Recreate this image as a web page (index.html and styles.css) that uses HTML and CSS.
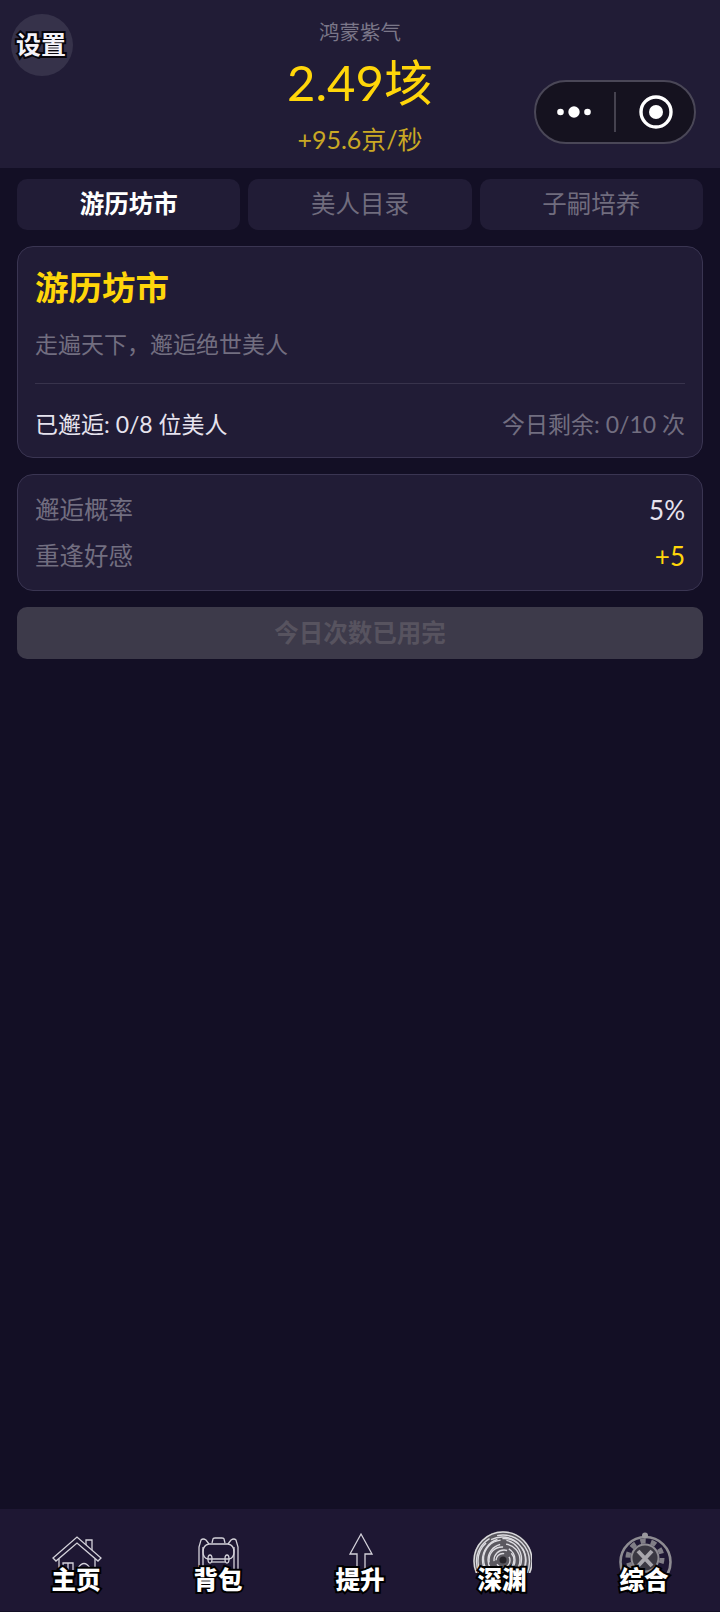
FILE: index.html
```html
<!DOCTYPE html>
<html lang="zh-CN">
<head>
    <meta charset="UTF-8">
    <meta name="viewport" content="width=device-width, initial-scale=1.0">
    <title>游历坊市</title>
    <link rel="stylesheet" href="styles.css">
</head>
<body>
    <div class="app">
        <header class="top-bar">
            <div class="settings-btn"><span>设置</span></div>
            <div class="wealth">
                <div class="wealth-label">鸿蒙紫气</div>
                <div class="wealth-value">2.49垓</div>
                <div class="wealth-rate">+95.6京/秒</div>
            </div>
            <div class="capsule">
                <svg class="capsule-more" viewBox="0 0 34 14">
                    <circle cx="3.5" cy="7" r="3.3"/>
                    <circle cx="17" cy="7" r="5.7"/>
                    <circle cx="30.5" cy="7" r="3.3"/>
                </svg>
                <i class="capsule-line"></i>
                <svg class="capsule-close" viewBox="0 0 34 34">
                    <circle class="ring" cx="17" cy="17" r="15"/>
                    <circle cx="17" cy="17" r="7"/>
                </svg>
            </div>
        </header>

        <main class="content">
            <div class="tabs">
                <div class="tab active">游历坊市</div>
                <div class="tab">美人目录</div>
                <div class="tab">子嗣培养</div>
            </div>

            <section class="card intro">
                <h2>游历坊市</h2>
                <p>走遍天下，邂逅绝世美人</p>
                <div class="intro-foot">
                    <span class="met">已邂逅: 0/8 位美人</span>
                    <span class="left">今日剩余: 0/10 次</span>
                </div>
            </section>

            <section class="card odds">
                <div class="odds-row"><span>邂逅概率</span><b>5%</b></div>
                <div class="odds-row"><span>重逢好感</span><b class="gold">+5</b></div>
            </section>

            <div class="go-btn">今日次数已用完</div>
        </main>

        <nav class="bottom-nav">
            <div class="nav-item">
                <svg class="nav-icon" viewBox="0 0 60 44">
                    <g class="line">
                        <path d="M7 23 L31 2 L55 23 L52 26 L31 8 L10 26 Z"/>
                        <path d="M40 10 V5 H46 V15"/>
                        <path d="M13 24 V44 M49 24 V44"/>
                        <path d="M17 38 V28 H27 V38 M22 28 V38"/>
                        <path d="M32 38 V33 Q38 24 44 33 V38"/>
                    </g>
                </svg>
                <span>主页</span>
            </div>
            <div class="nav-item">
                <svg class="nav-icon" viewBox="0 0 60 44">
                    <g class="line">
                        <path d="M24 8 L25 4 Q25 3 27 3 H34 Q36 3 36 4 L37 8"/>
                        <path d="M21 9 H40 Q46 10 46 17 Q46 23 41 24 H20 Q15 23 15 17 Q15 10 21 9 Z"/>
                        <path d="M21 9 L18 5 Q15 3 13 5 L11 12 V44"/>
                        <path d="M40 9 L43 5 Q46 3 48 5 L50 12 V44"/>
                        <path d="M15 12 V44 M46 12 V44"/>
                        <ellipse cx="22" cy="24" rx="2" ry="4"/>
                        <ellipse cx="39" cy="24" rx="2" ry="4"/>
                        <path d="M24 27 H37"/>
                    </g>
                </svg>
                <span>背包</span>
            </div>
            <div class="nav-item">
                <svg class="nav-icon arrow" viewBox="0 0 60 44">
                    <path class="line" d="M27 44 V19 H20 L31 -1 L42 19 H35 V44"/>
                </svg>
                <span>提升</span>
            </div>
            <div class="nav-item">
                <svg class="nav-icon tall" viewBox="0 0 60 42">
                    <circle cx="31" cy="30" r="30" fill="#5a585f"/>
                    <g class="swirl">
                        <circle cx="31" cy="30" r="29"/>
                        <circle cx="31" cy="30.5" r="26.5" stroke-dasharray="60 6 44 8"/>
                        <circle cx="30" cy="30" r="24" stroke-dasharray="30 5 60 6"/>
                        <circle cx="32" cy="29" r="21.5" stroke-dasharray="48 6 40 5"/>
                        <circle cx="30.5" cy="28" r="19" stroke-dasharray="36 7 44 6"/>
                        <circle cx="32" cy="29" r="16" stroke-dasharray="26 5 40 6"/>
                        <circle cx="30" cy="29" r="13" stroke-dasharray="34 4 24 6"/>
                        <circle cx="32" cy="29" r="10" stroke-dasharray="24 6 20 5"/>
                        <circle cx="31" cy="29.5" r="7" stroke-dasharray="18 4 12 6"/>
                    </g>
                    <circle cx="31" cy="29" r="3.5" fill="#26242a"/>
                </svg>
                <span>深渊</span>
            </div>
            <div class="nav-item">
                <svg class="nav-icon tall" viewBox="0 0 60 42">
                    <circle class="gear-ring" cx="31.5" cy="31" r="25"/>
                    <circle class="gear-teeth" cx="31" cy="27" r="17"/>
                    <circle class="gear-wheel" cx="31" cy="27" r="13.5"/>
                    <circle class="gear-top" cx="31" cy="4.5" r="3"/>
                    <path class="gear-tool" d="M24 20 L38 35 M38 20 L24 35"/>
                </svg>
                <span>综合</span>
            </div>
        </nav>
    </div>
</body>
</html>
```

FILE: styles.css
```css
* {
    box-sizing: border-box;
}
html, body {
    margin: 0;
    height: 100%;
}
body {
    font-family: "Lato", "Noto Sans CJK SC", sans-serif;
    background-color: #130f25;
    color: #e6e3ee;
}
.app {
    display: flex;
    flex-direction: column;
    height: 1612px;
}
.top-bar {
    position: relative;
    height: 168px;
    flex-shrink: 0;
    background-color: #211c36;
}
.settings-btn {
    position: absolute;
    left: 11px;
    top: 14px;
    width: 62px;
    height: 62px;
    padding: 0 2px 2px 0;
    border-radius: 50%;
    background-color: #36324a;
    display: flex;
    align-items: center;
    justify-content: center;
}
.settings-btn span {
    font-size: 25px;
    line-height: 26px;
    font-weight: 700;
    color: #f4f2f8;
    -webkit-text-stroke: 4px #07050c;
    paint-order: stroke fill;
}
.wealth {
    display: flex;
    flex-direction: column;
    align-items: center;
    padding-top: 18px;
}
.wealth-label {
    font-size: 20.5px;
    line-height: 28px;
    color: #7b7789;
}
.wealth-value {
    font-size: 49px;
    line-height: 66px;
    margin-top: 3px;
    color: #ffd60a;
}
.wealth-rate {
    font-size: 25px;
    line-height: 32px;
    margin-top: 8px;
    color: #c9a824;
}
.capsule {
    position: absolute;
    left: 534px;
    top: 80px;
    width: 162px;
    height: 64px;
    border: 2px solid #4a4757;
    border-radius: 32px;
    background-color: #15121f;
    display: flex;
    align-items: center;
}
.capsule-more {
    width: 34px;
    height: 14px;
    margin-left: 21px;
    fill: #fff;
}
.capsule-line {
    width: 2px;
    height: 40px;
    margin-left: 23px;
    background-color: #45424f;
}
.capsule-close {
    width: 34px;
    height: 34px;
    margin-left: 23px;
    fill: #fff;
}
.capsule-close .ring {
    fill: none;
    stroke: #fff;
    stroke-width: 3.4;
}
.content {
    flex: 1;
    padding: 11px 17px 0;
}
.tabs {
    display: flex;
    gap: 8px;
    margin-bottom: 16px;
}
.tab {
    flex: 1;
    height: 51px;
    border-radius: 10px;
    background-color: #211c36;
    font-size: 24.5px;
    line-height: 50px;
    text-align: center;
    color: #706c7e;
}
.tab.active {
    font-weight: 700;
    color: #fff;
}
.card {
    border: 1px solid #3a3552;
    border-radius: 16px;
    background-color: #211c36;
}
.intro {
    height: 212px;
    padding: 0 17px;
    margin-bottom: 16px;
}
.intro h2 {
    margin: 17px 0 0;
    font-size: 33.5px;
    line-height: 46px;
    font-weight: 700;
    color: #ffd60a;
}
.intro p {
    margin: 17px 0 0;
    height: 57px;
    font-size: 23px;
    line-height: 34px;
    color: #726e80;
    border-bottom: 1px solid #38334c;
}
.intro-foot {
    display: flex;
    justify-content: space-between;
    margin-top: 23px;
    font-size: 23px;
    line-height: 34px;
}
.met {
    color: #e6e3ee;
}
.left {
    color: #726e80;
}
.odds {
    height: 117px;
    padding: 18px 17px 0;
    margin-bottom: 16px;
}
.odds-row {
    display: flex;
    justify-content: space-between;
    height: 46px;
    font-size: 24.5px;
    line-height: 34px;
    color: #726e80;
}
.odds-row b {
    font-weight: 400;
    font-size: 26px;
    color: #e6e3ee;
}
.odds-row b.gold {
    color: #ffd60a;
}
.go-btn {
    height: 52px;
    border-radius: 10px;
    background-color: #3d3a4a;
    font-size: 24.5px;
    font-weight: 700;
    line-height: 52px;
    text-align: center;
    color: #57535f;
}
.bottom-nav {
    height: 102px;
    flex-shrink: 0;
    margin-bottom: 1px;
    padding: 0 5px;
    background-color: #1e1733;
    display: flex;
}
.nav-item {
    position: relative;
    flex: 1;
}
.nav-icon {
    position: absolute;
    left: 50%;
    top: 26px;
    width: 60px;
    height: 44px;
    margin-left: -30px;
}
.nav-icon.arrow {
    overflow: visible;
}
.nav-icon.tall {
    top: 22px;
    height: 42px;
}
.line {
    fill: none;
    stroke: #d4d2da;
    stroke-width: 1.3;
}
.swirl {
    fill: none;
    stroke: #dcdbe0;
    stroke-width: 1.4;
}
.gear-ring {
    fill: none;
    stroke: #8e8c92;
    stroke-width: 2.6;
}
.gear-wheel {
    fill: #3a3842;
    stroke: #8e8c92;
    stroke-width: 2;
}
.gear-teeth {
    fill: none;
    stroke: #807e86;
    stroke-width: 5;
    stroke-dasharray: 5.4 5.3;
}
.gear-top {
    fill: #9a989e;
}
.gear-tool {
    fill: none;
    stroke: #a8a6ac;
    stroke-width: 4;
}
.nav-item span {
    position: absolute;
    left: 50%;
    top: 58px;
    transform: translateX(-50%);
    white-space: nowrap;
    font-size: 24.5px;
    line-height: 26px;
    font-weight: 900;
    color: #fff;
    -webkit-text-stroke: 4px #000;
    paint-order: stroke fill;
}
```
